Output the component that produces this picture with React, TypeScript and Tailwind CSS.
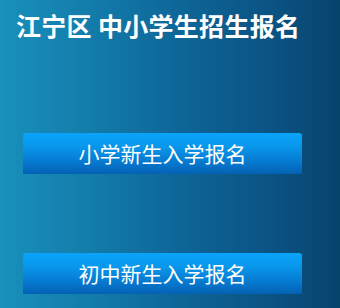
import React from "react";

export default function App() {
  return (
    <div
      className="w-[340px] h-[308px] overflow-hidden bg-[linear-gradient(90deg,#1890bc_0%,#1279a8_30%,#0e6496_55%,#0a5383_80%,#07446c_100%)]"
      style={{ fontFamily: '"Noto Sans CJK SC", "Noto Sans", sans-serif' }}
    >
      <h1 className="pt-[12px] pl-[16px] text-[25px] leading-[26px] font-bold text-white tracking-[0.3px]">
        江宁区 中小学生招生报名
      </h1>
      <div className="mt-[95px] flex flex-col gap-[79px] pl-[23px]">
        <button className="w-[279px] h-[41px] rounded-t-[3px] bg-[linear-gradient(180deg,#0aa3fb_0%,#0896ea_35%,#0676cc_75%,#0461b3_100%)] text-white text-[21px] leading-[41px] text-center">
          小学新生入学报名
        </button>
        <button className="w-[279px] h-[41px] rounded-t-[3px] bg-[linear-gradient(180deg,#0aa3fb_0%,#0896ea_35%,#0676cc_75%,#0461b3_100%)] text-white text-[21px] leading-[41px] text-center">
          初中新生入学报名
        </button>
      </div>
    </div>
  );
}
